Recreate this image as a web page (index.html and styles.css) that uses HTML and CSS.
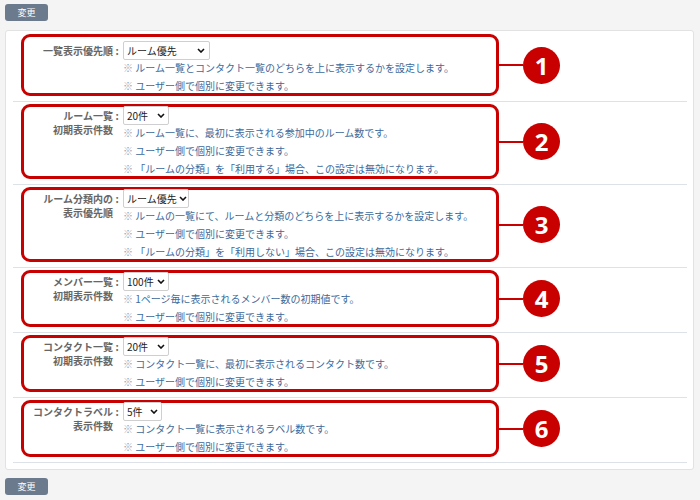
FILE: index.html
```html
<!DOCTYPE html>
<html lang="ja">
<head>
    <meta charset="UTF-8">
    <meta name="viewport" content="width=device-width, initial-scale=1.0">
    <title>表示設定</title>
    <link rel="stylesheet" href="styles.css">
</head>
<body>
    <button class="btn">変更</button>

    <div class="panel">
        <div class="row">
            <div class="mark">
                <div class="label">一覧表示優先順</div>
                <div class="colon">:</div>
                <div class="field">
                    <div class="pick">
                        <select class="sel w87"><option>ルーム優先</option><option>コンタクト優先</option></select>
                        <svg class="chev" width="8" height="5" viewBox="0 0 8 5"><path d="M1 1l3 3 3-3"/></svg>
                    </div>
                    <p class="note"><span class="kome">※</span> ルーム一覧とコンタクト一覧のどちらを上に表示するかを設定します。</p>
                    <p class="note"><span class="kome">※</span> ユーザー側で個別に変更できます。</p>
                </div>
            </div>
            <div class="link"></div>
            <div class="num">1</div>
        </div>

        <div class="row">
            <div class="mark">
                <div class="label">ルーム一覧<br>初期表示件数</div>
                <div class="colon">:</div>
                <div class="field">
                    <div class="pick">
                        <select class="sel w46"><option>20件</option><option>50件</option></select>
                        <svg class="chev" width="8" height="5" viewBox="0 0 8 5"><path d="M1 1l3 3 3-3"/></svg>
                    </div>
                    <p class="note"><span class="kome">※</span> ルーム一覧に、最初に表示される参加中のルーム数です。</p>
                    <p class="note"><span class="kome">※</span> ユーザー側で個別に変更できます。</p>
                    <p class="note"><span class="kome">※</span> 「ルームの分類」を「利用する」場合、この設定は無効になります。</p>
                </div>
            </div>
            <div class="link"></div>
            <div class="num">2</div>
        </div>

        <div class="row">
            <div class="mark">
                <div class="label">ルーム分類内の<br>表示優先順</div>
                <div class="colon">:</div>
                <div class="field">
                    <div class="pick">
                        <select class="sel w66"><option>ルーム優先</option><option>分類優先</option></select>
                        <svg class="chev" width="8" height="5" viewBox="0 0 8 5"><path d="M1 1l3 3 3-3"/></svg>
                    </div>
                    <p class="note"><span class="kome">※</span> ルームの一覧にて、ルームと分類のどちらを上に表示するかを設定します。</p>
                    <p class="note"><span class="kome">※</span> ユーザー側で個別に変更できます。</p>
                    <p class="note"><span class="kome">※</span> 「ルームの分類」を「利用しない」場合、この設定は無効になります。</p>
                </div>
            </div>
            <div class="link"></div>
            <div class="num">3</div>
        </div>

        <div class="row">
            <div class="mark">
                <div class="label">メンバー一覧<br>初期表示件数</div>
                <div class="colon">:</div>
                <div class="field">
                    <div class="pick">
                        <select class="sel w46"><option>100件</option><option>50件</option></select>
                        <svg class="chev" width="8" height="5" viewBox="0 0 8 5"><path d="M1 1l3 3 3-3"/></svg>
                    </div>
                    <p class="note"><span class="kome">※</span> 1ページ毎に表示されるメンバー数の初期値です。</p>
                    <p class="note"><span class="kome">※</span> ユーザー側で個別に変更できます。</p>
                </div>
            </div>
            <div class="link"></div>
            <div class="num">4</div>
        </div>

        <div class="row">
            <div class="mark">
                <div class="label">コンタクト一覧<br>初期表示件数</div>
                <div class="colon">:</div>
                <div class="field">
                    <div class="pick">
                        <select class="sel w46"><option>20件</option><option>50件</option></select>
                        <svg class="chev" width="8" height="5" viewBox="0 0 8 5"><path d="M1 1l3 3 3-3"/></svg>
                    </div>
                    <p class="note"><span class="kome">※</span> コンタクト一覧に、最初に表示されるコンタクト数です。</p>
                    <p class="note"><span class="kome">※</span> ユーザー側で個別に変更できます。</p>
                </div>
            </div>
            <div class="link"></div>
            <div class="num">5</div>
        </div>

        <div class="row">
            <div class="mark">
                <div class="label">コンタクトラベル<br>表示件数</div>
                <div class="colon">:</div>
                <div class="field">
                    <div class="pick">
                        <select class="sel w39"><option>5件</option><option>10件</option></select>
                        <svg class="chev" width="8" height="5" viewBox="0 0 8 5"><path d="M1 1l3 3 3-3"/></svg>
                    </div>
                    <p class="note"><span class="kome">※</span> コンタクト一覧に表示されるラベル数です。</p>
                    <p class="note"><span class="kome">※</span> ユーザー側で個別に変更できます。</p>
                </div>
            </div>
            <div class="link"></div>
            <div class="num">6</div>
        </div>
    </div>

    <button class="btn">変更</button>
</body>
</html>
```

FILE: styles.css
```css
body {
    margin: 0;
    padding: 4px 6px 0 5px;
    background-color: #f4f4f4;
    font-family: "Noto Sans CJK JP", "Noto Sans", sans-serif;
    font-size: 10px;
    color: #333;
}

/* Submit buttons */
.btn {
    display: block;
    width: 43px;
    height: 17px;
    padding: 0;
    border: none;
    border-radius: 3px;
    background-color: #6b7a8c;
    color: #fff;
    font-family: inherit;
    font-size: 9px;
    line-height: 17px;
    cursor: pointer;
}

/* Settings panel */
.panel {
    margin: 9px 0 8px;
    padding: 0 6px 6px 7px;
    background-color: #fff;
    border: 1px solid #e2e2e2;
    border-radius: 3px;
}

.row {
    display: flex;
    align-items: center;
    padding: 2px 0 5px 8px;
    border-bottom: 1px solid #dde1e8;
}

.row:first-child {
    padding-top: 3px;
}

/* Red annotation box */
.mark {
    display: flex;
    align-items: flex-start;
    width: 472px;
    border: 3px solid #c80000;
    border-radius: 9px;
}

.row:first-child .mark {
    padding: 5px 0 0;
}

.label {
    width: 89px;
    padding-top: 2px;
    text-align: right;
    line-height: 14px;
    font-weight: bold;
    color: #666;
    white-space: nowrap;
}

.colon {
    width: 8px;
    padding-top: 2px;
    text-align: center;
    line-height: 14px;
    font-weight: bold;
    color: #666;
}

.field {
    margin: -1px 0 -2px 2px;
}

.pick {
    position: relative;
    height: 18px;
}

.sel {
    height: 19px;
    padding: 0 14px 0 3px;
    border: 1px solid #cfcfcf;
    border-radius: 2px;
    background-color: #fff;
    color: #222;
    font-family: inherit;
    font-size: 10px;
    -webkit-appearance: none;
    appearance: none;
}

.w87 { width: 87px; }
.w66 { width: 66px; padding-right: 8px; }
.w46 { width: 46px; }
.w39 { width: 39px; }

.chev {
    position: absolute;
    top: 7px;
    left: 0;
    pointer-events: none;
}

.chev path {
    fill: none;
    stroke: #111;
    stroke-width: 1.6;
}

.w87 + .chev { left: 74px; }
.w66 + .chev { left: 56px; }
.w46 + .chev { left: 34px; }
.w39 + .chev { left: 27px; }

.note {
    margin: 0;
    line-height: 18px;
    color: #3d6a9b;
    white-space: nowrap;
}

.kome {
    color: #9aa6b4;
}

/* Connector and number badge */
.link {
    width: 24px;
    height: 2px;
    background-color: #c80000;
}

.num {
    width: 37px;
    height: 37px;
    border-radius: 50%;
    background-color: #c80000;
    color: #fff;
    font-family: "Open Sans", "Noto Sans", sans-serif;
    font-weight: bold;
    font-size: 24px;
    line-height: 37px;
    text-align: center;
}
```
